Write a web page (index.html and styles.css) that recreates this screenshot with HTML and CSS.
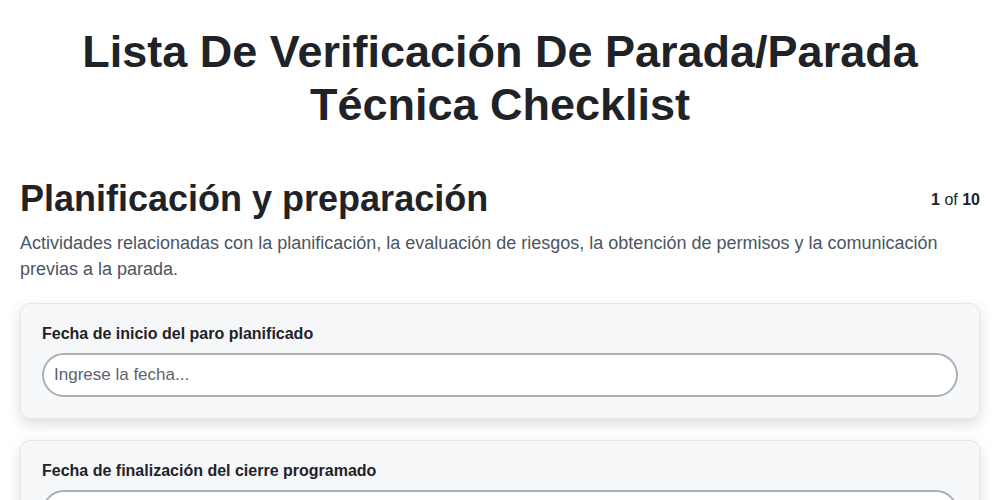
FILE: index.html
```html
<!DOCTYPE html>
<html lang="es">
<head>
    <meta charset="UTF-8">
    <meta name="viewport" content="width=device-width, initial-scale=1.0">
    <title>Lista De Verificación</title>
    <link rel="stylesheet" href="styles.css">
</head>
<body>

    <div class="page">
        <h1 class="title">Lista De Verificación De Parada/Parada Técnica Checklist</h1>

        <div class="section-head">
            <h2>Planificación y preparación</h2>
            <span class="pager"><b>1</b> of <b>10</b></span>
        </div>
        <p class="section-desc">Actividades relacionadas con la planificación, la evaluación de riesgos, la obtención de permisos y la comunicación previas a la parada.</p>

        <div class="card">
            <label class="field-label">Fecha de inicio del paro planificado</label>
            <input class="field-input" type="text" placeholder="Ingrese la fecha...">
        </div>

        <div class="card">
            <label class="field-label">Fecha de finalización del cierre programado</label>
            <input class="field-input" type="text" placeholder="Ingrese la fecha...">
        </div>
    </div>

</body>
</html>
```

FILE: styles.css
```css
body {
    font-family: "Liberation Sans", Arial, sans-serif;
    margin: 0;
    padding: 0;
    background: white;
    color: #1f2328;
}

.page {
    padding: 0 20px;
}

.title {
    font-size: 45px;
    line-height: 53px;
    font-weight: bold;
    text-align: center;
    margin: 25px 40px 46px;
    color: #1f2328;
}

.section-head {
    display: flex;
    justify-content: space-between;
    align-items: center;
}

.section-head h2 {
    font-size: 36px;
    line-height: 44px;
    margin: 0;
}

.pager {
    font-size: 16px;
    color: #1f2328;
    padding-top: 2px;
}

.section-desc {
    font-size: 18px;
    line-height: 26px;
    color: #4b5563;
    margin: 9px 0 21px;
}

.card {
    background: #f6f7f9;
    border: 1px solid #e5e7eb;
    border-radius: 10px;
    box-shadow: 0 5px 14px rgba(0, 0, 0, 0.14);
    padding: 21px 21px 21px;
    margin-bottom: 21px;
}

.field-label {
    display: block;
    font-size: 16px;
    font-weight: bold;
    color: #1f2328;
    margin-bottom: 10px;
}

.field-input {
    display: block;
    box-sizing: border-box;
    width: 100%;
    height: 44px;
    border: 2px solid #a9b0b9;
    border-radius: 22px;
    padding: 0 10px;
    font-family: inherit;
    font-size: 17px;
    background: white;
}

.field-input::placeholder {
    color: #5b6370;
}
```
